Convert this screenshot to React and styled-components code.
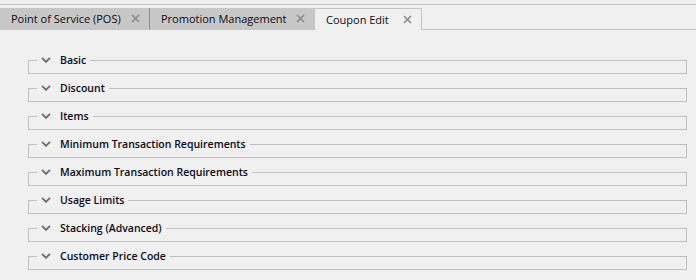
import React from "react";
import styled, { createGlobalStyle } from "styled-components";

const GlobalStyle = createGlobalStyle`
  body {
    margin: 0;
    background: #f0f0f0;
    font-family: "Open Sans", "Noto Sans", sans-serif;
    color: #000;
  }
`;

const tabs = [
  { label: "Point of Service (POS)", width: 150 },
  { label: "Promotion Management", width: 164 },
  { label: "Coupon Edit", width: 108, active: true },
];

const sections = [
  "Basic",
  "Discount",
  "Items",
  "Minimum Transaction Requirements",
  "Maximum Transaction Requirements",
  "Usage Limits",
  "Stacking (Advanced)",
  "Customer Price Code",
];

function CloseIcon() {
  return (
    <svg width="9" height="9" viewBox="0 0 9 9">
      <path d="M1 1 L8 8 M8 1 L1 8" stroke="#8a8a8a" strokeWidth="1.6" fill="none" />
    </svg>
  );
}

function Chevron() {
  return (
    <svg width="10" height="6" viewBox="0 0 10 6">
      <path d="M1 0.8 L5 4.8 L9 0.8" stroke="#6a6a6a" strokeWidth="1.8" fill="none" />
    </svg>
  );
}

export default function App() {
  return (
    <>
      <GlobalStyle />
      <TopRule />
      <TabStrip>
        {tabs.map((t, i) => (
          <Tab key={t.label} $active={t.active} $width={t.width} $divider={i === 0}>
            <TabLabel>{t.label}</TabLabel>
            <CloseIcon />
          </Tab>
        ))}
        <StripFill />
      </TabStrip>
      <Sections>
        {sections.map((s) => (
          <Group key={s}>
            <Legend>
              <Chevron />
              <span>{s}</span>
            </Legend>
          </Group>
        ))}
      </Sections>
    </>
  );
}

const TopRule = styled.div`
  height: 4px;
  border-bottom: 1px solid #c4c4c4;
  margin-bottom: 3px;
`;

const TabStrip = styled.div`
  display: flex;
  height: 22px;
`;

const Tab = styled.div`
  box-sizing: border-box;
  width: ${(p) => p.$width}px;
  display: flex;
  align-items: center;
  justify-content: space-between;
  padding: 0 9px 0 11px;
  font-size: 11px;
  background: ${(p) => (p.$active ? "#f0f0f0" : "#c7c7c7")};
  border: ${(p) => (p.$active ? "1px solid #c4c4c4" : "none")};
  border-bottom: ${(p) => (p.$active ? "none" : "1px solid #c7c7c7")};
  border-right: ${(p) => (p.$divider ? "1px solid #8e8e8e" : p.$active ? "1px solid #c4c4c4" : "none")};
  color: #0a0a14;
`;

const TabLabel = styled.span`
  white-space: nowrap;
  line-height: 16px;
`;

const StripFill = styled.div`
  flex: 1;
  border-bottom: 1px solid #c4c4c4;
`;

const Sections = styled.div`
  display: flex;
  flex-direction: column;
  gap: 6px;
  padding: 22px 9px 0 28px;
`;

const Group = styled.fieldset`
  margin: 0;
  padding: 0;
  height: 20px;
  border: 1px solid #c0c0c0;
  box-sizing: content-box;
`;

const Legend = styled.legend`
  display: flex;
  align-items: center;
  gap: 9px;
  margin-left: 8px;
  padding: 0 4px;
  font-size: 10.5px;
  font-weight: 600;
  line-height: 16px;
  color: #0a0a1a;
  white-space: nowrap;
`;
